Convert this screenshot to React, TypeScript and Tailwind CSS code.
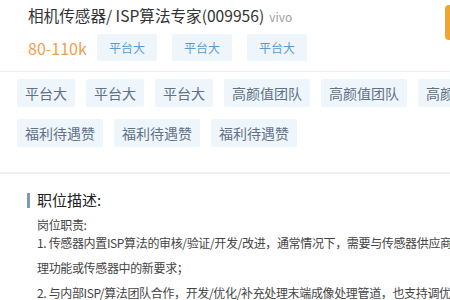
import React from "react";

const font = { fontFamily: '"Noto Sans CJK SC", "Noto Sans", sans-serif' };

function TopTag({ children }: { children: React.ReactNode }) {
  return (
    <div className="h-[27px] w-[60px] flex items-center justify-center bg-[#eef6fc] text-[12px] text-[#5b9bd5] rounded-[2px]">
      {children}
    </div>
  );
}

function Tag({ children }: { children: React.ReactNode }) {
  return (
    <div className="h-[28px] px-2 flex items-center bg-[#eef5fb] text-[14px] text-[#5f7186] rounded-[2px] whitespace-nowrap shrink-0">
      {children}
    </div>
  );
}

export default function App() {
  const tags1 = ["平台大", "平台大", "平台大", "高颜值团队", "高颜值团队", "高颜值团队"];
  const tags2 = ["福利待遇赞", "福利待遇赞", "福利待遇赞"];
  return (
    <div className="w-[450px] h-[300px] overflow-hidden bg-white relative" style={font}>
      <div className="absolute right-[-32px] top-[5px] w-[37px] h-[35px] rounded-[4px] bg-[#f2a52e]" />
      <div className="pl-7 pt-1 pb-[10px] border-b border-[#eeeeee]">
        <div className="flex items-baseline leading-[22px]">
          <span className="text-[15.6px] text-[#333333]">相机传感器/ ISP算法专家(009956)</span>
          <span className="ml-[5px] text-[12px] text-[#a0a0a0]">vivo</span>
        </div>
        <div className="mt-[6px] flex items-center h-[27px]">
          <span className="text-[16px] text-[#f0a050] w-[69px]">80-110k</span>
          <div className="flex gap-[15px]">
            <TopTag>平台大</TopTag>
            <TopTag>平台大</TopTag>
            <TopTag>平台大</TopTag>
          </div>
        </div>
      </div>
      <div className="pl-[17px] pt-[7px] pb-[25px] border-b-2 border-[#efefef] w-[600px]">
        <div className="flex gap-[11px]">
          {tags1.map((t, i) => (
            <Tag key={i}>{t}</Tag>
          ))}
        </div>
        <div className="flex gap-[11px] mt-[12px]">
          {tags2.map((t, i) => (
            <Tag key={i}>{t}</Tag>
          ))}
        </div>
      </div>
      <div className="pt-[15px]">
        <div className="pl-[27px] flex items-center h-[22px]">
          <div className="w-[3px] h-[15px] bg-[#7a9cb8]" />
          <span className="ml-[7px] text-[15px] text-[#222222]">职位描述:</span>
        </div>
        <div className="mt-[4px] pl-[37px] text-[12px] text-[#444444] whitespace-nowrap tracking-[-0.35px]">
          <div className="leading-[20px]">岗位职责:</div>
          <div className="-mt-[5px] leading-[25px]">
            <div>1. 传感器内置ISP算法的审核/验证/开发/改进，通常情况下，需要与传感器供应商合作处</div>
            <div>理功能或传感器中的新要求；</div>
            <div>2. 与内部ISP/算法团队合作，开发/优化/补充处理末端成像处理管道，也支持调优</div>
          </div>
        </div>
      </div>
    </div>
  );
}
